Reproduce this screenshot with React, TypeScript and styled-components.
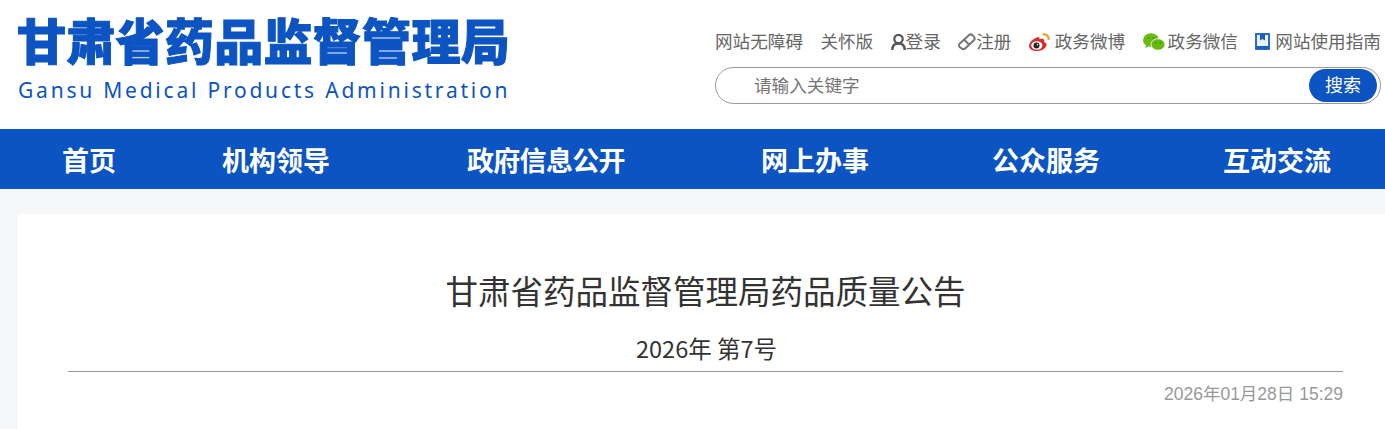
import React from "react";
import styled, { createGlobalStyle } from "styled-components";

const blue = "#0c54c2";
const cjk = `"Noto Sans CJK SC", "Liberation Sans", sans-serif`;

const GlobalStyle = createGlobalStyle`
  html, body {
    margin: 0;
    padding: 0;
    background: #f6f7f9;
    font-family: ${cjk};
    overflow: hidden;
  }
`;

const Header = styled.header`
  height: 129px;
  background: #fff;
  display: flex;
  justify-content: space-between;
  padding: 0 4px 0 18px;
`;

const Logo = styled.div`
  padding-top: 7px;
  color: ${blue};
`;

const LogoTitle = styled.div`
  font-size: 49px;
  line-height: 64px;
  font-weight: 900;
  letter-spacing: 0.3px;
  margin-left: -1px;
  white-space: nowrap;
  -webkit-text-stroke: 1px ${blue};
`;

const LogoSub = styled.div`
  margin-top: 4px;
  font-family: "Noto Sans", sans-serif;
  font-size: 21px;
  line-height: 30px;
  letter-spacing: 2.78px;
  white-space: nowrap;
`;

const Tools = styled.div`
  width: 666px;
  padding-top: 27px;
`;

const LinkRow = styled.div`
  display: flex;
  align-items: center;
  height: 26px;
`;

const TopLink = styled.a<{ $gap?: number }>`
  display: flex;
  align-items: center;
  margin-right: ${(p) => p.$gap ?? 17.4}px;
  font-size: 17.6px;
  color: #666;
  white-space: nowrap;
`;

const IconSlot = styled.svg<{ $gap?: number }>`
  flex: none;
  margin-top: 3px;
  margin-right: ${(p) => p.$gap ?? 0}px;
`;

const SearchBox = styled.div`
  margin-top: 14px;
  height: 37px;
  width: 666px;
  box-sizing: border-box;
  border: 1px solid #999;
  border-radius: 19px;
  display: flex;
  align-items: center;
  justify-content: space-between;
  padding: 0 3px 0 38px;
`;

const Placeholder = styled.span`
  padding-bottom: 3px;
  font-size: 17.6px;
  color: #757575;
`;

const SearchButton = styled.button`
  width: 68px;
  height: 33px;
  border: 0;
  padding: 0 0 3px;
  border-radius: 17px;
  background: ${blue};
  color: #fff;
  font-family: ${cjk};
  font-size: 18px;
`;

const Nav = styled.nav`
  height: 60px;
  background: ${blue};
  display: grid;
  grid-template-columns: 160px 245px 294px 231px 231px auto;
  align-items: center;
  padding-left: 62px;
`;

const NavItem = styled.a<{ $tight?: boolean }>`
  font-size: 27px;
  font-weight: 700;
  letter-spacing: ${(p) => (p.$tight ? "-0.7px" : "0")};
  color: #fff;
  white-space: nowrap;
`;

const Page = styled.main`
  padding: 25px 0 0 18px;
`;

const Card = styled.section`
  background: #fff;
  padding: 52px 42px 0 50px;
  height: 215px;
  box-sizing: border-box;
`;

const Title = styled.h1`
  margin: 0;
  font-size: 32.5px;
  line-height: 48px;
  font-weight: 400;
  color: #333;
  text-align: center;
`;

const Issue = styled.div`
  margin-top: 16px;
  padding: 0 0 5px 2px;
  font-size: 23.5px;
  line-height: 36px;
  color: #333;
  text-align: center;
  border-bottom: 1px solid #999;
`;

const DateLine = styled.div`
  margin-top: 10px;
  font-family: "Liberation Sans", "Noto Sans CJK SC", sans-serif;
  font-size: 17.5px;
  line-height: 24px;
  color: #999;
  text-align: right;
`;

const navItems = ["首页", "机构领导", "政府信息公开", "网上办事", "公众服务", "互动交流"];

export default function App() {
  return (
    <>
      <GlobalStyle />
      <Header>
        <Logo>
          <LogoTitle>甘肃省药品监督管理局</LogoTitle>
          <LogoSub>Gansu Medical Products Administration</LogoSub>
        </Logo>
        <Tools>
          <LinkRow>
            <TopLink>网站无障碍</TopLink>
            <TopLink>关怀版</TopLink>
            <TopLink>
              <IconSlot width="15" height="17" viewBox="0 0 15 17">
                <circle cx="7.5" cy="6" r="4.2" fill="none" stroke="#555" strokeWidth="2.2" />
                <path d="M1.300 17c0-4.200 2-6.500 6.200-6.500s6.200 2.300 6.200 6.500" fill="none" stroke="#555" strokeWidth="2.400" />
              </IconSlot>
              登录
            </TopLink>
            <TopLink>
              <IconSlot width="18" height="17" viewBox="0 0 18 17">
                <path d="M1.800 10.600 10.600 2.400a3 3 0 0 1 4.200.1l.9.9a3 3 0 0 1-.1 4.200L7.400 15.200a2.800 2.800 0 0 1-3.900 0l-1.800-1a2.500 2.500 0 0 1 .1-3.600Z" fill="#fff" stroke="#777" strokeWidth="2" />
                <path d="M6 6.500 11 11.500" stroke="#777" strokeWidth="2" />
              </IconSlot>
              注册
            </TopLink>
            <TopLink>
              <IconSlot width="21" height="18" viewBox="0 0 21 18" $gap={5}>
                <path d="M8.400 4.200C4.200 5.600 0 9.500 0 13c0 3 3.700 5 8.200 5 5.200 0 9.300-3 9.300-6.200 0-1.800-1.400-2.500-2.500-2.900.5-1.500.4-2.900-1.200-3.200-1.300-.2-3 .5-3.300.6.200-2-.6-2.600-2.100-2.100Z" fill="#d9292b" />
                <ellipse cx="7.800" cy="12.500" rx="5.600" ry="4.200" fill="#fff" />
                <circle cx="7.500" cy="12.600" r="3" fill="#222" />
                <circle cx="8.500" cy="11.800" r=".8" fill="#fff" />
                <path d="M13.800 1.300c3.500-.6 6.300 2 5.800 5.500" fill="none" stroke="#eda23e" strokeWidth="2.400" />
              </IconSlot>
              政务微博
            </TopLink>
            <TopLink>
              <IconSlot width="22" height="18" viewBox="0 0 22 18" $gap={3}>
                <ellipse cx="8" cy="7" rx="8" ry="6.800" fill="#69bb12" />
                <path d="M3 12l-.5 3.200 3.500-2.200Z" fill="#69bb12" />
                <ellipse cx="15" cy="11.500" rx="7" ry="5.800" fill="#69bb12" stroke="#fff" strokeWidth=".8" />
                <circle cx="5.500" cy="5" r="1" fill="#4c8f0a" />
                <circle cx="10.500" cy="5" r="1" fill="#4c8f0a" />
                <circle cx="12.800" cy="10" r=".9" fill="#4c8f0a" />
                <circle cx="17.200" cy="10" r=".9" fill="#4c8f0a" />
              </IconSlot>
              政务微信
            </TopLink>
            <TopLink $gap={0}>
              <IconSlot width="15" height="17" viewBox="0 0 15 17" $gap={5}>
                <rect x="1" y="1" width="13" height="15" fill="#eaf1fb" stroke="#1a5fc4" strokeWidth="1.800" />
                <path d="M5 1h5v6.500L7.500 6 5 7.500z" fill="#1a5fc4" />
                <path d="M1 13h13v3H1z" fill="#1a5fc4" />
              </IconSlot>
              网站使用指南
            </TopLink>
          </LinkRow>
          <SearchBox>
            <Placeholder>请输入关键字</Placeholder>
            <SearchButton>搜索</SearchButton>
          </SearchBox>
        </Tools>
      </Header>
      <Nav>
        {navItems.map((item) => (
          <NavItem key={item} $tight={item.length > 4}>
            {item}
          </NavItem>
        ))}
      </Nav>
      <Page>
        <Card>
          <Title>甘肃省药品监督管理局药品质量公告</Title>
          <Issue>2026年 第7号</Issue>
          <DateLine>2026年01月28日 15:29</DateLine>
        </Card>
      </Page>
    </>
  );
}
